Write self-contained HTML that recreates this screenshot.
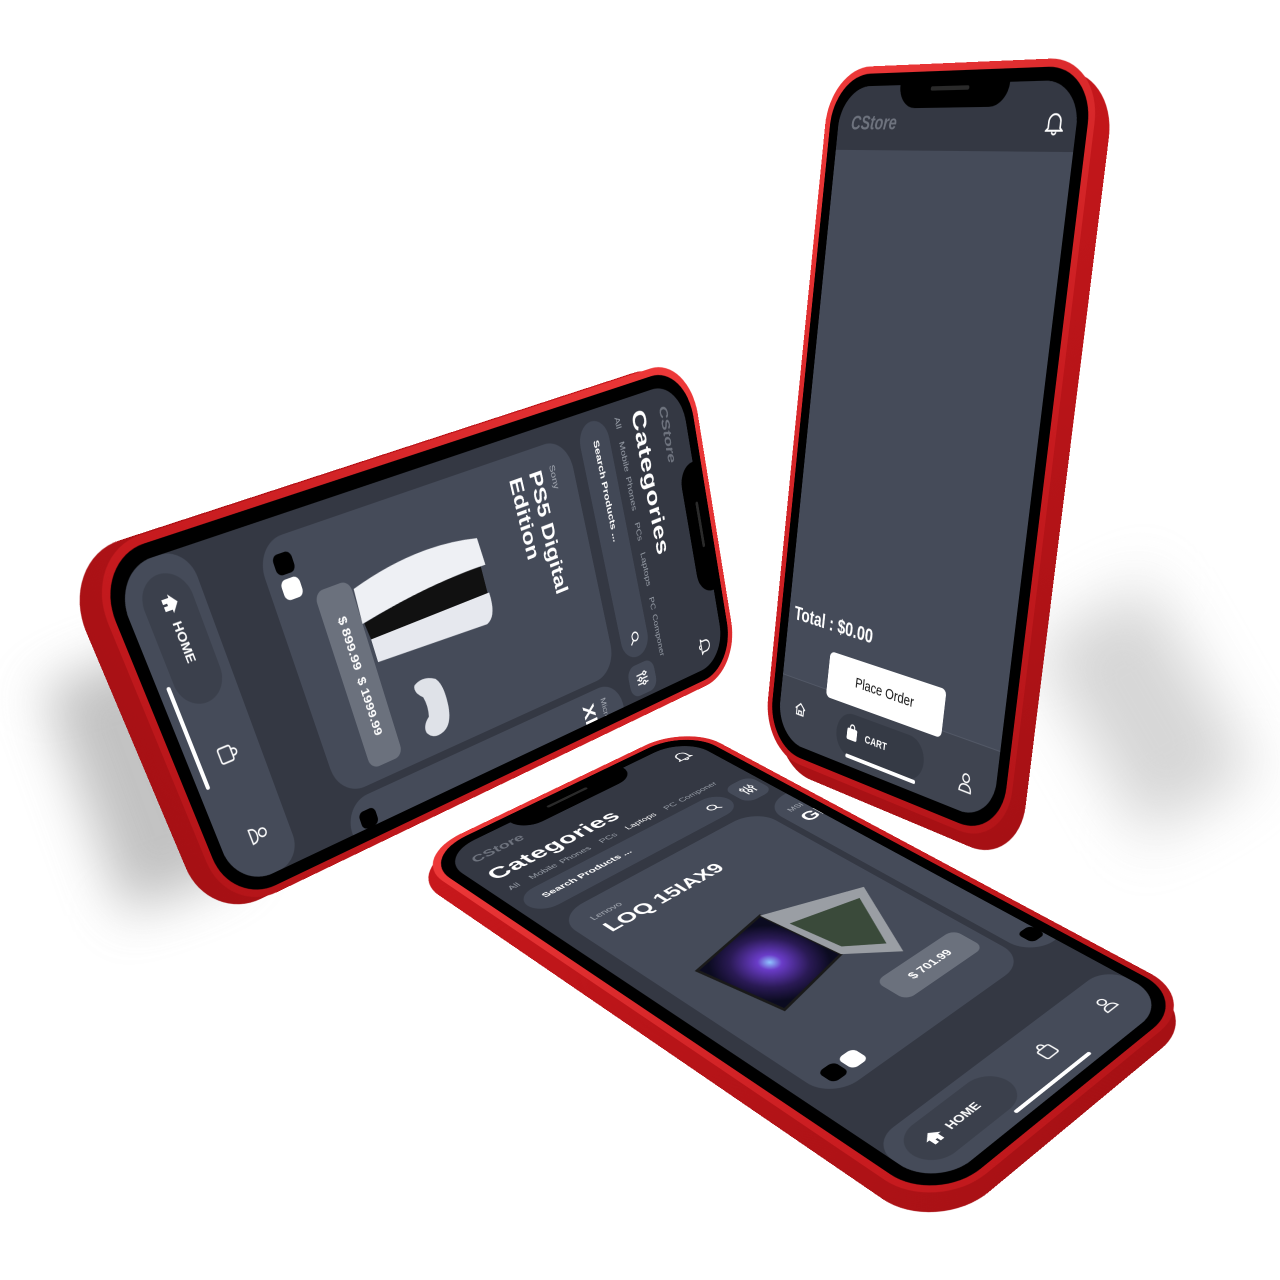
<!DOCTYPE html>
<html><head><meta charset="utf-8">
<style>
*{margin:0;padding:0;box-sizing:border-box}
html,body{width:1280px;height:1280px;background:#fff;overflow:hidden;font-family:"Liberation Sans",sans-serif}
.phone{position:absolute;width:320px;height:700px;transform-origin:0 0}
.side{position:absolute;width:334px;height:714px;border-radius:58px;background:linear-gradient(160deg,#c9181c,#a51014)}
.frame{position:absolute;left:-7px;top:-7px;width:334px;height:714px;border-radius:56px;background:linear-gradient(135deg,#ef3a3a,#c81b1f 60%,#b31418)}
.bezel{position:absolute;left:0;top:0;width:320px;height:700px;border-radius:50px;background:#000}
.scr{position:absolute;left:12px;top:12px;width:296px;height:676px;border-radius:40px;overflow:hidden;background:#343843}
.notch{position:absolute;left:92px;top:0;width:136px;height:34px;background:#000;border-radius:0 0 22px 22px}
.notch:after{content:"";position:absolute;left:40px;top:14px;width:48px;height:4px;border-radius:2px;background:#2a2a2a}
.abs{position:absolute}
.logo{position:absolute;left:18px;top:20px;font-weight:bold;font-style:italic;font-size:17px;color:#6e737e}
.cat{position:absolute;left:14px;top:50px;font-weight:bold;font-size:27px;color:#fff;letter-spacing:.5px}
.tabs{position:absolute;left:14px;top:90px;font-size:10px;color:#9aa0aa;white-space:nowrap;word-spacing:2px}
.tabs span{margin-right:12px}
.search{position:absolute;left:10px;top:110px;width:240px;height:40px;border-radius:20px;background:#424856;color:#fff;font-size:11px;font-weight:bold;padding:13px 0 0 18px}
.filt{position:absolute;left:258px;top:110px;width:34px;height:40px;border-radius:12px;background:#454b59}
.card{position:absolute;left:16px;top:165px;width:240px;height:375px;border-radius:30px;background:#454b59}
.card2{position:absolute;left:264px;top:165px;width:236px;height:375px;border-radius:30px;background:#454b59}
.brand{position:absolute;left:20px;top:22px;font-size:10px;color:#a8adb6}
.pname{position:absolute;left:20px;top:36px;font-size:23px;font-weight:bold;color:#fff;line-height:26px}
.card2 .brand,.card2 .pname{left:12px}
.pill{position:absolute;height:40px;border-radius:10px;background:#6b717d;color:#fff;font-weight:bold;font-size:13px;padding-top:12px;text-align:center}
.sw{position:absolute;width:18px;height:20px;border-radius:6px}
.nav{position:absolute;left:0;top:602px;width:296px;height:80px;background:#454b59;border-radius:26px 26px 0 0}
.hpill{position:absolute;left:14px;top:612px;width:112px;height:48px;border-radius:24px;background:#3b404c;color:#fff;font-weight:bold;font-size:12px;padding:17px 0 0 40px}
.ind{position:absolute;left:102px;top:664px;width:96px;height:4px;border-radius:2px;background:#fff}
</style></head><body>

<div class="abs" style="left:1080px;top:600px;width:130px;height:220px;background:#bbb;filter:blur(30px);transform:rotate(-30deg);opacity:.6"></div>
<div class="abs" style="left:80px;top:660px;width:120px;height:240px;background:#999;filter:blur(26px);transform:rotate(-20deg);opacity:.6"></div>

<!-- PHONE 2 -->
<div class="phone" style="left:685px;top:365px;transform:matrix3d(0.172,1.05666,0,0.00038544,-0.66754,0.22027,0,-0.00030477,0,0,1,0,0,0,0,1)">
  <div class="side" style="left:-8px;top:14px"></div>
  <div class="frame"></div>
  <div class="bezel">
    <div class="scr">
      <div class="logo">CStore</div>
      <svg class="abs" style="left:262px;top:18px" width="18" height="20" viewBox="0 0 18 20" fill="none" stroke="#fff" stroke-width="1.6"><path d="M3 14V9a6 6 0 0 1 12 0v5l2 2H1z M7 17a2 2 0 0 0 4 0"/></svg>
      <div class="cat">Categories</div>
      <div class="tabs"><span>All</span><span>Mobile Phones</span><span>PCs</span><span>Laptops</span><span>PC Componer</span></div>
      <div class="search">Search Products ...
        <svg class="abs" style="left:212px;top:12px" width="16" height="16" viewBox="0 0 16 16" fill="none" stroke="#fff" stroke-width="1.6"><circle cx="6.5" cy="6.5" r="4.5"/><path d="M10 10l4 4"/></svg></div>
      <div class="filt"><svg class="abs" style="left:8px;top:11px" width="18" height="18" viewBox="0 0 18 18" stroke="#fff" stroke-width="1.5"><path d="M4 1v16M9 1v16M14 1v16"/><circle cx="4" cy="5" r="2" fill="#454b59"/><circle cx="9" cy="12" r="2" fill="#454b59"/><circle cx="14" cy="7" r="2" fill="#454b59"/></svg></div>
      <div class="card">
        <div class="brand">Sony</div>
        <div class="pname">PS5 Digital<br>Edition</div>
        <svg class="abs" style="left:20px;top:130px" width="220" height="170" viewBox="0 0 220 170">
          <path d="M40 8 Q26 80 44 160 L76 162 Q64 80 66 6 Z" fill="#eef0f4"/>
          <path d="M66 12 L92 12 L92 158 L76 160 Q64 80 66 12Z" fill="#111"/>
          <path d="M92 10 Q116 8 120 22 L114 158 L92 158 Z" fill="#e6e8ee"/>
          <path d="M150 100 q8 -8 30 -6 q18 2 22 14 q4 14 -6 20 q-8 2 -14 -8 q-10 -3 -20 0 q-8 10 -14 6 q-6 -12 2 -26z" fill="#dfe2e8"/>
        </svg>
        <div class="pill" style="left:55px;top:292px;width:172px">$ 899.99 &nbsp;$ 1999.99</div>
        <div class="sw" style="left:14px;top:342px;background:#000"></div>
        <div class="sw" style="left:36px;top:342px;background:#fff"></div>
      </div>
      <div class="card2">
        <div class="brand">Micro</div>
        <div class="pname">Xb</div>
        <div class="sw" style="left:14px;top:342px;background:#000"></div>
        <div class="sw" style="left:36px;top:342px;background:#fff"></div>
      </div>
      <div class="nav"></div>
      <div class="hpill"><svg class="abs" style="left:16px;top:14px" width="18" height="18" viewBox="0 0 18 18"><path d="M9 2L1 9h3v7h4v-4h2v4h4V9h3z" fill="#fff"/></svg>HOME</div>
      <svg class="abs" style="left:165px;top:624px" width="20" height="22" viewBox="0 0 20 22" fill="none" stroke="#fff" stroke-width="1.6"><rect x="3" y="7" width="14" height="13" rx="2"/><path d="M7 7V5a3 3 0 0 1 6 0v2"/></svg>
      <svg class="abs" style="left:245px;top:624px" width="20" height="22" viewBox="0 0 20 22" fill="none" stroke="#fff" stroke-width="1.6"><circle cx="10" cy="7" r="4"/><path d="M3 20q0-7 7-7t7 7z"/></svg>
      <div class="ind"></div>
    </div>
    <div class="notch"></div>
  </div>
</div>

<!-- PHONE 3 -->
<div class="phone" style="left:420px;top:858px;transform:matrix3d(0.93956,-0.45213,0,0.00040719,0.58677,0.39459,0,-0.00029143,0,0,1,0,0,0,0,1)">
  <div class="side" style="left:-22px;top:8px"></div>
  <div class="frame"></div>
  <div class="bezel">
    <div class="scr">
      <div class="logo">CStore</div>
      <svg class="abs" style="left:262px;top:18px" width="18" height="20" viewBox="0 0 18 20" fill="none" stroke="#fff" stroke-width="1.6"><path d="M3 14V9a6 6 0 0 1 12 0v5l2 2H1z M7 17a2 2 0 0 0 4 0"/></svg>
      <div class="cat">Categories</div>
      <div class="tabs"><span>All</span><span>Mobile Phones</span><span>PCs</span><span style="color:#fff">Laptops</span><span>PC Componer</span></div>
      <div class="search">Search Products ...
        <svg class="abs" style="left:212px;top:12px" width="16" height="16" viewBox="0 0 16 16" fill="none" stroke="#fff" stroke-width="1.6"><circle cx="6.5" cy="6.5" r="4.5"/><path d="M10 10l4 4"/></svg></div>
      <div class="filt"><svg class="abs" style="left:8px;top:11px" width="18" height="18" viewBox="0 0 18 18" stroke="#fff" stroke-width="1.5"><path d="M4 1v16M9 1v16M14 1v16"/><circle cx="4" cy="5" r="2" fill="#454b59"/><circle cx="9" cy="12" r="2" fill="#454b59"/><circle cx="14" cy="7" r="2" fill="#454b59"/></svg></div>
      <div class="card">
        <div class="brand">Lenovo</div>
        <div class="pname">LOQ 15IAX9</div>
        <svg class="abs" style="left:5px;top:120px" width="230" height="170" viewBox="0 0 230 170">
          <defs><radialGradient id="g1" cx="50%" cy="50%" r="50%"><stop offset="0" stop-color="#8fc4ff"/><stop offset=".2" stop-color="#6a3cc8"/><stop offset=".65" stop-color="#2a1a55"/><stop offset="1" stop-color="#0b0b20"/></radialGradient></defs>
          <path d="M30 40 L120 20 L130 120 L45 140 Z" fill="url(#g1)" stroke="#1a1a1a" stroke-width="3"/>
          <path d="M120 20 L215 60 L170 160 L130 120 Z" fill="#9a9ea4"/>
          <path d="M130 50 L200 70 L168 140 L138 112 Z" fill="#3a4a3a"/>
        </svg>
        <div class="pill" style="left:128px;top:292px;width:100px">$ 701.99</div>
        <div class="sw" style="left:14px;top:342px;background:#000"></div>
        <div class="sw" style="left:36px;top:342px;background:#fff"></div>
      </div>
      <div class="card2">
        <div class="brand">MSI</div>
        <div class="pname">GL</div>
        <div class="sw" style="left:14px;top:342px;background:#000"></div>
        <div class="sw" style="left:36px;top:342px;background:#fff"></div>
      </div>
      <div class="nav"></div>
      <div class="hpill"><svg class="abs" style="left:16px;top:14px" width="18" height="18" viewBox="0 0 18 18"><path d="M9 2L1 9h3v7h4v-4h2v4h4V9h3z" fill="#fff"/></svg>HOME</div>
      <svg class="abs" style="left:165px;top:624px" width="20" height="22" viewBox="0 0 20 22" fill="none" stroke="#fff" stroke-width="1.6"><rect x="3" y="7" width="14" height="13" rx="2"/><path d="M7 7V5a3 3 0 0 1 6 0v2"/></svg>
      <svg class="abs" style="left:245px;top:624px" width="20" height="22" viewBox="0 0 20 22" fill="none" stroke="#fff" stroke-width="1.6"><circle cx="10" cy="7" r="4"/><path d="M3 20q0-7 7-7t7 7z"/></svg>
      <div class="ind"></div>
    </div>
    <div class="notch"></div>
  </div>
</div>

<!-- PHONE 1 -->
<div class="phone" style="left:835px;top:75px;transform:matrix3d(0.6963,-0.02678,0,-0.000447,-0.10166,1.01657,0,0.0000887,0,0,1,0,0,0,0,1)">
  <div class="side" style="left:10px;top:4px"></div>
  <div class="frame"></div>
  <div class="bezel">
    <div class="scr" style="background:#454b59">
      <div class="abs" style="left:0;top:0;width:296px;height:62px;background:#343843"></div>
      <div class="logo" style="top:26px;font-size:19px">CStore</div>
      <svg class="abs" style="left:262px;top:26px" width="20" height="22" viewBox="0 0 18 20" fill="none" stroke="#fff" stroke-width="1.6"><path d="M3 14V9a6 6 0 0 1 12 0v5l2 2H1z M7 17a2 2 0 0 0 4 0"/></svg>
      <div class="abs" style="left:8px;top:528px;color:#fff;font-weight:bold;font-size:20px">Total : $0.00</div>
      <div class="abs" style="left:0;top:606px;width:296px;height:80px;background:#3f4450;border-top:1px solid #525866"></div>
      <div class="abs" style="left:66px;top:566px;width:158px;height:48px;background:#fff;border-radius:6px;color:#111;font-size:15px;text-align:center;padding-top:15px">Place Order</div>
      <svg class="abs" style="left:22px;top:628px" width="18" height="18" viewBox="0 0 18 18" fill="none" stroke="#fff" stroke-width="1.5"><path d="M2 9L9 3l7 6M4 8v7h10V8M7 15v-4h4v4"/></svg>
      <div class="abs" style="left:86px;top:622px;width:120px;height:44px;border-radius:22px;background:#353a45;color:#fff;font-weight:bold;font-size:11px;padding:15px 0 0 40px">CART</div>
      <svg class="abs" style="left:100px;top:632px" width="16" height="18" viewBox="0 0 16 18"><rect x="1" y="5" width="14" height="12" rx="2" fill="#fff"/><path d="M5 5V4a3 3 0 0 1 6 0v1" fill="none" stroke="#fff" stroke-width="1.6"/></svg>
      <svg class="abs" style="left:250px;top:636px" width="20" height="22" viewBox="0 0 20 22" fill="none" stroke="#fff" stroke-width="1.6"><circle cx="10" cy="7" r="4"/><path d="M3 20q0-7 7-7t7 7z"/></svg>
      <div class="ind" style="top:664px"></div>
    </div>
    <div class="notch"></div>
  </div>
</div>

</body></html>
